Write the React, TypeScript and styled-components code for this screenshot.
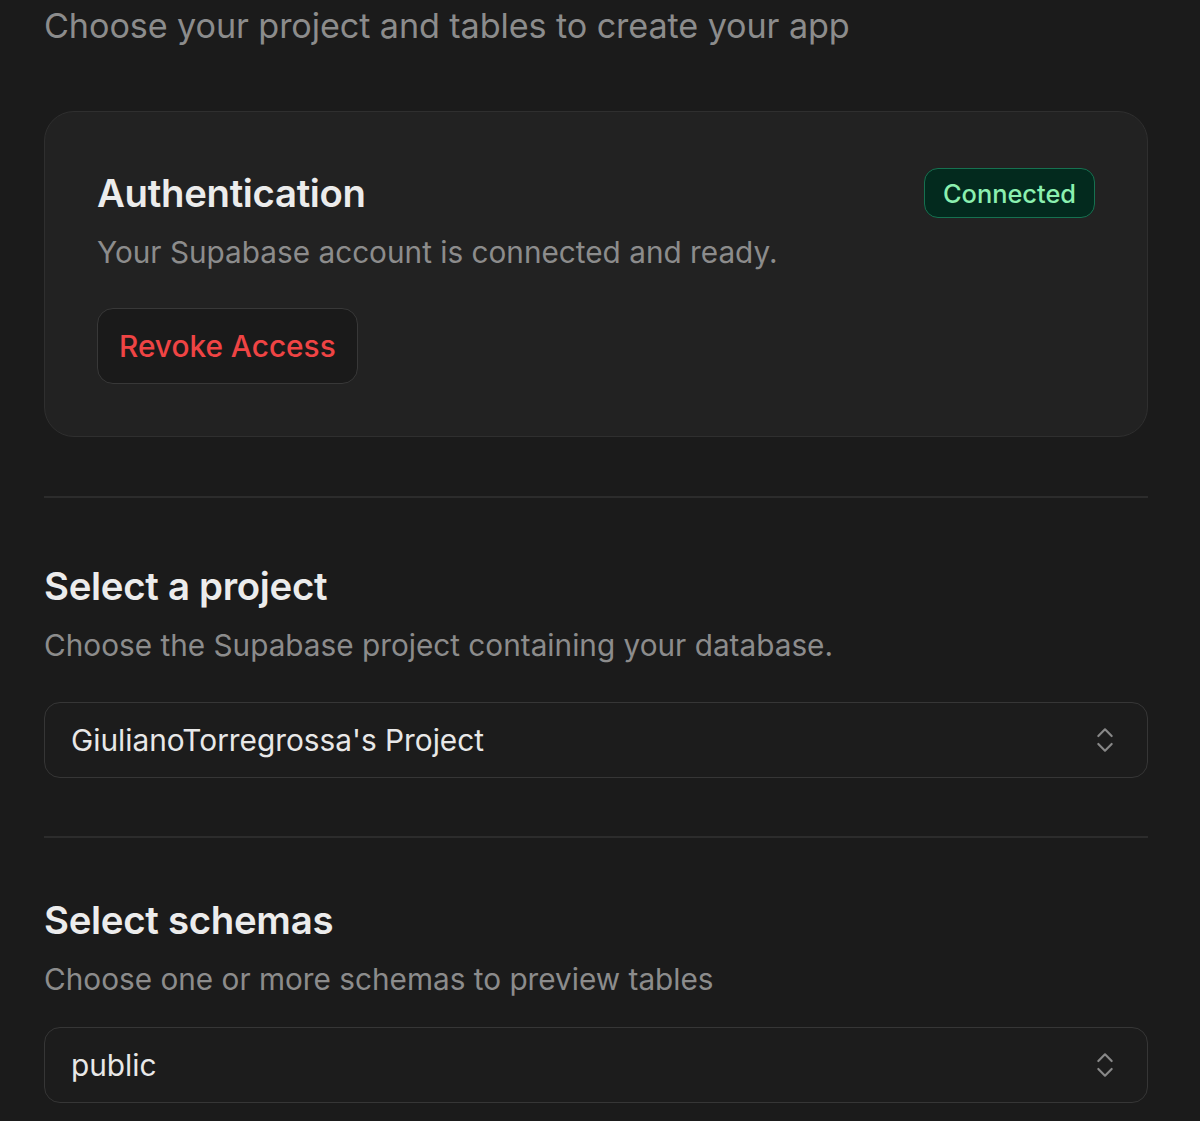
import React from "react";
import styled, { createGlobalStyle } from "styled-components";
import { ChevronsUpDown } from "lucide-react";

const Global = createGlobalStyle`
  html, body {
    margin: 0;
    padding: 0;
    background: #1b1b1b;
  }
  body {
    font-family: Inter, "Noto Sans", sans-serif;
    -webkit-font-smoothing: antialiased;
  }
`;

const Page = styled.main`
  width: 1104px;
  margin-left: 44px;
  padding-top: 2px;
  display: flex;
  flex-direction: column;
  color: #ececec;
`;

const Lead = styled.p`
  margin: 0;
  font-size: 34.2px;
  line-height: 48px;
  color: #8c8c8c;
  letter-spacing: -0.1px;
`;

const Card = styled.section`
  margin-top: 61px;
  background: #222222;
  border: 1px solid #2f2f2f;
  border-radius: 30px;
  padding: 56px 52px 52px;
  display: flex;
  flex-direction: column;
`;

const CardHeader = styled.div`
  display: flex;
  align-items: center;
  justify-content: space-between;
`;

const CardTitle = styled.h2`
  margin: 0;
  font-size: 38.3px;
  line-height: 44px;
  font-weight: 600;
  color: #ececec;
  letter-spacing: -0.3px;
`;

const Badge = styled.span`
  display: inline-flex;
  align-items: center;
  height: 50px;
  box-sizing: border-box;
  padding: 0 18px;
  border-radius: 14px;
  background: #032a1e;
  border: 1.5px solid #167150;
  color: #8bf0b0;
  font-size: 25.4px;
  font-weight: 500;
`;

const Muted = styled.p`
  margin: 0;
  font-size: 29.75px;
  line-height: 40px;
  color: #8c8c8c;
`;

const CardText = styled(Muted)`
  margin-top: 14px;
`;

const DangerButton = styled.button`
  align-self: flex-start;
  margin-top: 36px;
  height: 76px;
  padding: 0 21px;
  border-radius: 16px;
  background: #1a1a1a;
  border: 1.5px solid #383838;
  color: #ef4444;
  font-family: inherit;
  font-size: 29.8px;
  font-weight: 500;
  cursor: pointer;
`;

const Divider = styled.hr`
  margin: 0;
  border: none;
  height: 2px;
  background: #2c2c2c;
`;

const Section = styled.section`
  display: flex;
  flex-direction: column;
`;

const SectionTitle = styled.h2`
  margin: 0;
  font-size: 38.4px;
  line-height: 48px;
  font-weight: 600;
  color: #ececec;
  letter-spacing: -0.3px;
`;

const SectionText = styled(Muted)`
  margin-top: 15px;
`;

const Select = styled.div<{ $gap: number }>`
  margin-top: ${(p) => p.$gap}px;
  height: 76px;
  box-sizing: border-box;
  border: 1.5px solid #363636;
  border-radius: 16px;
  background: #1c1c1c;
  display: flex;
  align-items: center;
  justify-content: space-between;
  padding: 0 26px 0 26px;
  font-size: 29.8px;
  color: #e8e8e8;
  svg {
    color: #888888;
  }
`;

const Stack = styled.div<{ $gap: number }>`
  display: flex;
  flex-direction: column;
  padding-top: ${(p) => p.$gap}px;
`;

export default function App() {
  return (
    <>
      <Global />
      <Page>
        <Lead>Choose your project and tables to create your app</Lead>
        <Card>
          <CardHeader>
            <CardTitle>Authentication</CardTitle>
            <Badge>Connected</Badge>
          </CardHeader>
          <CardText>Your Supabase account is connected and ready.</CardText>
          <DangerButton>Revoke Access</DangerButton>
        </Card>
        <Stack $gap={59}>
          <Divider />
        </Stack>
        <Stack $gap={64}>
          <Section>
            <SectionTitle>Select a project</SectionTitle>
            <SectionText>Choose the Supabase project containing your database.</SectionText>
            <Select $gap={37}>
              <span>GiulianoTorregrossa's Project</span>
              <ChevronsUpDown size={32} strokeWidth={1.6} />
            </Select>
          </Section>
        </Stack>
        <Stack $gap={58}>
          <Divider />
        </Stack>
        <Stack $gap={58}>
          <Section>
            <SectionTitle>Select schemas</SectionTitle>
            <SectionText>Choose one or more schemas to preview tables</SectionText>
            <Select $gap={28}>
              <span>public</span>
              <ChevronsUpDown size={32} strokeWidth={1.6} />
            </Select>
          </Section>
        </Stack>
      </Page>
    </>
  );
}
